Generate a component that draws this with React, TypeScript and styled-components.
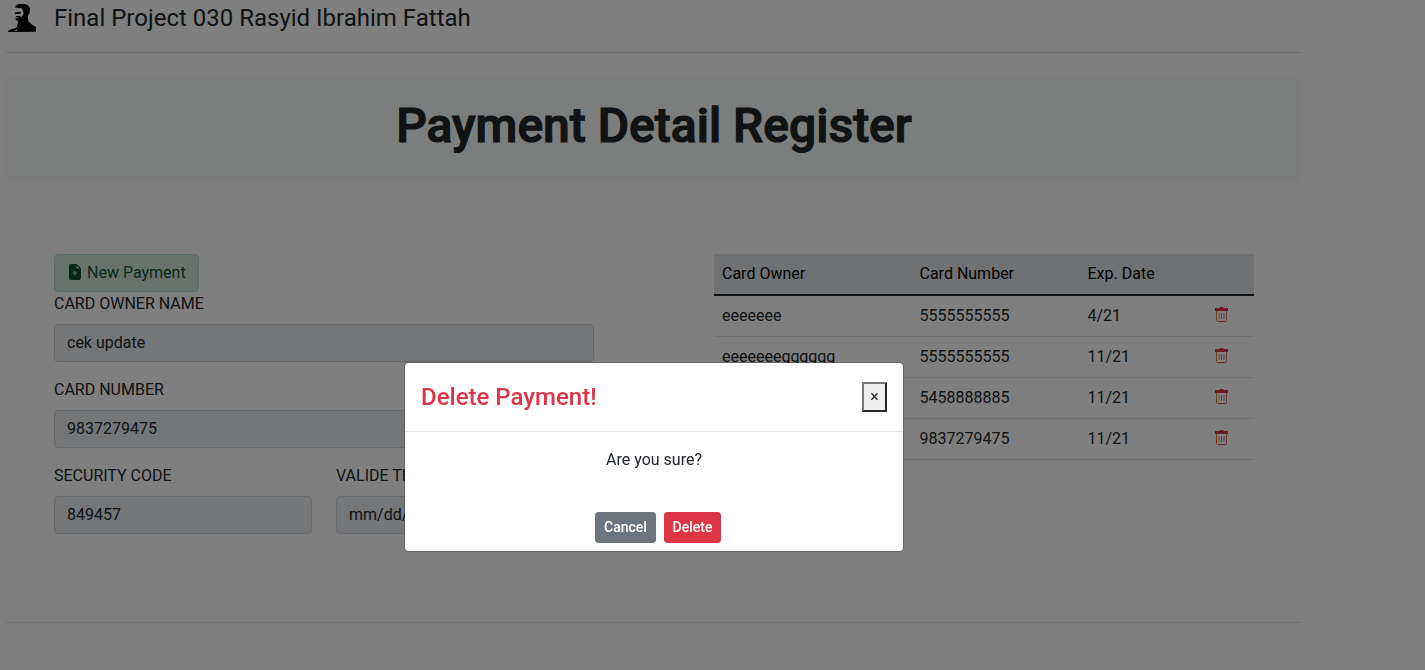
import React from 'react';
import styled, { createGlobalStyle, css } from 'styled-components';
import { BsFileEarmarkPlusFill } from 'react-icons/bs';

const GlobalStyle = createGlobalStyle`
  *, *::before, *::after { box-sizing: border-box; }
  body {
    margin: 0;
    background: #fff;
    color: #212529;
    font-family: Roboto, "Liberation Sans", sans-serif;
    font-size: 16px;
    font-weight: 400;
    line-height: 1.5;
    overflow: hidden;
  }
  h1, h4, p { margin: 0; }
  button, input { font-family: inherit; }
`;

const Container = styled.div`
  width: 1296px;
  margin-left: 6px;
`;

const Header = styled.header`
  display: flex;
  align-items: center;
  gap: 16px;
  padding-bottom: 16px;
  margin-bottom: 24px;
  border-bottom: 1px solid #dee2e6;
  font-size: 24px;
`;

const Banner = styled.section`
  height: 105px;
  padding-top: 20px;
  border-radius: 4.8px;
  background: #f6fcf9;
  text-align: center;
`;

const BannerTitle = styled.h1`
  font-size: 48px;
  font-weight: 500;
  line-height: 1.2;
  -webkit-text-stroke: 1.2px currentColor;
`;

const Columns = styled.main`
  display: grid;
  grid-template-columns: 540px 540px;
  gap: 120px;
  padding: 72px 48px 88px;
`;

const NewButton = styled.button`
  display: inline-flex;
  align-items: center;
  gap: 4px;
  height: 38px;
  padding: 0 12px 2px;
  border: 1px solid #badbcc;
  border-radius: 4px;
  background: #d1e7dd;
  color: #0f5132;
  font-size: 16px;
  font-weight: 400;
`;

const Form = styled.form`
  display: flex;
  flex-direction: column;
  align-items: stretch;
  ${NewButton} { align-self: flex-start; }
`;

const Fields = styled.div`
  display: grid;
  grid-template-columns: 1fr 1fr;
  gap: 16px 24px;
`;

const Field = styled.label<{ $wide?: boolean }>`
  display: flex;
  flex-direction: column;
  gap: 8px;
  ${({ $wide }) => $wide && css`grid-column: span 2;`}
`;

const Input = styled.input`
  width: 100%;
  height: 38px;
  padding: 5px 12px 7px;
  border: 1px solid #ced4da;
  border-radius: 4px;
  background: #e9ecef;
  color: #212529;
  font-size: 16px;
  font-weight: 400;
`;

const Table = styled.table`
  width: 540px;
  align-self: start;
  table-layout: fixed;
  border-spacing: 0;
  text-align: left;
`;

const HeadCell = styled.th<{ $width: number }>`
  width: ${({ $width }) => $width}px;
  height: 42px;
  padding: 0 8px 1px;
  border-bottom: 2px solid #212529;
  background: #dfe2e5;
  color: #000;
  font-weight: 400;
`;

const Cell = styled.td`
  height: 41px;
  padding: 0 8px 1px;
  border-bottom: 1px solid #dee2e6;
`;

const IconCell = styled(Cell)`
  padding: 0 8px 4px 7px;
  color: #dc3545;
  svg { display: block; }
`;

const Footer = styled.footer`
  height: 47px;
  border-top: 1px solid #dee2e6;
`;

const Backdrop = styled.div`
  position: fixed;
  inset: 0;
  background: rgba(0, 0, 0, 0.5);
`;

const Dialog = styled.div`
  position: fixed;
  left: 404px;
  top: 362px;
  width: 500px;
  border: 1px solid rgba(0, 0, 0, 0.2);
  border-radius: 4.8px;
  background: #fff;
  background-clip: padding-box;
`;

const DialogHeader = styled.div`
  display: flex;
  align-items: center;
  justify-content: space-between;
  padding: 16px;
  border-bottom: 1px solid #dee2e6;
`;

const DialogTitle = styled.h4`
  color: #dc3545;
  font-size: 24px;
  font-weight: 500;
  line-height: 36px;
`;

const CloseButton = styled.button`
  width: 25px;
  height: 30px;
  padding: 0;
  border: 2px solid;
  border-color: #767676 #212529 #212529 #767676;
  background: #efefef;
  color: #212529;
  font-size: 16px;
  font-weight: 400;
  line-height: 24px;
`;

const DialogBody = styled.p`
  padding: 16px 16px 32px;
  text-align: center;
`;

const DialogFooter = styled.div`
  display: flex;
  justify-content: center;
  gap: 8px;
  padding: 8px 0 8px 8px;
`;

const ActionButton = styled.button<{ $danger?: boolean }>`
  width: ${({ $danger }) => ($danger ? 57 : 61)}px;
  height: 31px;
  padding: 4px 0;
  border: 1px solid ${({ $danger }) => ($danger ? '#dc3545' : '#6c757d')};
  border-radius: 3.2px;
  background: ${({ $danger }) => ($danger ? '#dc3545' : '#6c757d')};
  color: #fff;
  font-size: 14px;
  font-weight: 500;
  line-height: 21px;
`;

const Portrait = () => (
  <svg width="32" height="36" viewBox="0 0 96 108" aria-hidden="true">
    <path d="M27 24 29 17 37 12 56 12 66 16 72 25 71 39 66 47 66 60 70 67 78 74 90 80 90 95 31 96 35 86 33 77 37 65 33 61 28 58 29 55 37 55 36 52 29 51 30 48 41 48 46 51 50 47 53 39 50 29 46 24 37 25 30 22Z" fill="#000" />
    <path d="M26 40 31 36 43 36 45 40 38 42 28 42ZM6 93 17 87 28 85 33 80 36 87 28 91 24 93 42 94 42 96 6 96Z" fill="#000" />
  </svg>
);

const TrashIcon = () => (
  <svg width="16" height="18" viewBox="0 0 16 18" fill="none" aria-hidden="true">
    <path d="M1 3h4.500q.3-1 1-1h2q.7 0 1 1H14v3H1Z" fill="currentColor" />
    <path d="M2.500 6v9.500q0 1 1 1" stroke="#e07a3c" />
    <path d="M3.500 16.500h8" stroke="currentColor" />
    <path d="M12.500 6v9.500q0 1-1 1" stroke="#d66a8c" />
    <path d="M5 8v6" stroke="#e08a50" />
    <path d="M7.500 8v6M10 8v6" stroke="#c87078" />
  </svg>
);

const columns = [
  { title: 'Card Owner', width: 197.5 },
  { title: 'Card Number', width: 168 },
  { title: 'Exp. Date', width: 127 },
  { title: '', width: 47.5 },
];

const payments = [
  ['eeeeeee', '5555555555', '4/21'],
  ['eeeeeeegggggg', '5555555555', '11/21'],
  ['eeeeeee', '5458888885', '11/21'],
  ['cek update', '9837279475', '11/21'],
];

export default function App() {
  return (
    <>
      <GlobalStyle />
      <Container>
        <Header>
          <Portrait />
          <span>Final Project 030 Rasyid Ibrahim Fattah</span>
        </Header>
        <Banner>
          <BannerTitle>Payment Detail Register</BannerTitle>
        </Banner>
        <Columns>
          <Form>
            <NewButton type="button">
              <BsFileEarmarkPlusFill size={16} />
              New Payment
            </NewButton>
            <Fields>
              <Field $wide>
                CARD OWNER NAME
                <Input readOnly value="cek update" />
              </Field>
              <Field $wide>
                CARD NUMBER
                <Input readOnly value="9837279475" />
              </Field>
              <Field>
                SECURITY CODE
                <Input readOnly value="849457" />
              </Field>
              <Field>
                VALIDE THRU
                <Input readOnly value="mm/dd/yyyy" />
              </Field>
            </Fields>
          </Form>
          <Table>
            <thead>
              <tr>
                {columns.map((column) => (
                  <HeadCell key={column.title} $width={column.width}>{column.title}</HeadCell>
                ))}
              </tr>
            </thead>
            <tbody>
              {payments.map((payment, row) => (
                <tr key={row}>
                  {payment.map((value, index) => <Cell key={index}>{value}</Cell>)}
                  <IconCell><TrashIcon /></IconCell>
                </tr>
              ))}
            </tbody>
          </Table>
        </Columns>
        <Footer />
      </Container>
      <Backdrop />
      <Dialog role="dialog">
        <DialogHeader>
          <DialogTitle>Delete Payment!</DialogTitle>
          <CloseButton type="button">×</CloseButton>
        </DialogHeader>
        <DialogBody>Are you sure?</DialogBody>
        <DialogFooter>
          <ActionButton type="button">Cancel</ActionButton>
          <ActionButton type="button" $danger>Delete</ActionButton>
        </DialogFooter>
      </Dialog>
    </>
  );
}
